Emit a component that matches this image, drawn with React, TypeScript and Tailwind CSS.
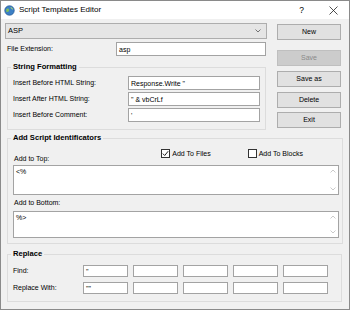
import React from 'react'

const font = "font-['Liberation_Sans',Arial,sans-serif]"

function TextBox({ value = '', className = '' }: { value?: string; className?: string }) {
  return (
    <div className={`bg-white border border-[#a3a3a3] flex items-center pl-[2px] text-[7px] leading-none whitespace-nowrap overflow-hidden ${className}`}>
      {value}
    </div>
  )
}

function Button({ label, disabled = false, className = '' }: { label: string; disabled?: boolean; className?: string }) {
  return (
    <div
      className={`w-[64px] h-[16px] flex items-center justify-center text-[7px] border ${
        disabled ? 'bg-[#cccccc] border-[#bfbfbf] text-[#8a8a8a]' : 'bg-[#e1e1e1] border-[#adadad] text-black'
      } ${className}`}
    >
      {label}
    </div>
  )
}

function Group({ title, className = '', children }: { title: string; className?: string; children: React.ReactNode }) {
  return (
    <fieldset className={`border border-[#dcdcdc] pl-[5px] ${className}`}>
      <legend className="ml-[-2px] px-[2px] text-[7.6px] leading-[10px] font-bold">{title}</legend>
      {children}
    </fieldset>
  )
}

function ScrollArea({ value, className = '' }: { value: string; className?: string }) {
  return (
    <div className={`bg-white border border-[#a3a3a3] flex ${className}`}>
      <div className="flex-1 pl-[2px] pt-[2px] text-[7px] leading-none">{value}</div>
      <div className="w-[10px] flex flex-col justify-between items-center py-[3px]">
        <svg width="6" height="4" viewBox="0 0 6 4">
          <polyline points="0.5,3.5 3,1 5.5,3.5" fill="none" stroke="#c4c4c4" strokeWidth="0.9" />
        </svg>
        <svg width="6" height="4" viewBox="0 0 6 4">
          <polyline points="0.5,0.5 3,3 5.5,0.5" fill="none" stroke="#c4c4c4" strokeWidth="0.9" />
        </svg>
      </div>
    </div>
  )
}

function Check({ checked, label }: { checked: boolean; label: string }) {
  return (
    <div className="flex items-center gap-[2px]">
      <div className="w-[9px] h-[9px] border border-[#333] bg-white flex items-center justify-center">
        {checked && (
          <svg width="7" height="7" viewBox="0 0 7 7">
            <polyline points="0.8,3.6 2.7,5.5 6.2,1.2" fill="none" stroke="#222" strokeWidth="1" />
          </svg>
        )}
      </div>
      <span className="text-[7px] leading-none">{label}</span>
    </div>
  )
}

export default function App() {
  const formatRows = [
    { label: 'Insert Before HTML String:', value: 'Response.Write "' },
    { label: 'Insert After HTML String:', value: '" & vbCrLf' },
    { label: 'Insert Before Comment:', value: "'" },
  ]

  return (
    <div className={`w-[350px] h-[310px] bg-[#f0f0f0] border border-[#8a8a8a] flex flex-col text-black ${font}`}>
      {/* title bar */}
      <div className="h-[18px] bg-white flex items-center shrink-0">
        <svg className="ml-[3px]" width="11" height="11" viewBox="0 0 11 11">
          <circle cx="5.5" cy="5.5" r="4.8" fill="#3c7fc4" />
          <path d="M2.2 4.2 C3.5 2.8 5 3.5 5.2 5 C5.4 6.5 3.5 7.5 2.3 6.8 Z" fill="#7fbf5a" />
          <path d="M6.3 2 C7.8 2.2 9 3.4 9.3 4.8 C8.2 4.6 7 4 6.3 2 Z" fill="#9fd07a" />
          <circle cx="5.5" cy="5.5" r="4.8" fill="none" stroke="#1d4f8a" strokeWidth="0.6" />
        </svg>
        <span className="ml-[4px] text-[8px] leading-none">Script Templates Editor</span>
        <span className="ml-auto text-[8.5px] leading-none mr-[25px]">?</span>
        <svg className="mr-[11px]" width="9" height="9" viewBox="0 0 9 9">
          <path d="M0.5 0.5 L8.5 8.5 M8.5 0.5 L0.5 8.5" stroke="#222" strokeWidth="0.8" />
        </svg>
      </div>

      <div className="pl-[4px] flex flex-col">
        <div className="flex">
          {/* left column */}
          <div className="w-[262px] flex flex-col">
            <div className="mt-[4px] h-[16px] bg-[#e5e5e5] border border-[#adadad] flex items-center pl-[2px] pr-[5px] text-[7.5px]">
              <span>ASP</span>
              <svg className="ml-auto" width="6" height="4" viewBox="0 0 6 4">
                <polyline points="0.5,0.5 3,3 5.5,0.5" fill="none" stroke="#555" strokeWidth="0.8" />
              </svg>
            </div>
            <div className="mt-[3px] flex items-center pl-[2px]">
              <span className="w-[109px] text-[7px]">File Extension:</span>
              <TextBox value="asp" className="w-[150px] h-[14px]" />
            </div>
            <Group title="String Formatting" className="ml-[2px] w-[259px] mt-[6px] pb-[7px]">
              <div className="flex flex-col gap-[2px] mt-[4px]">
                {formatRows.map((r) => (
                  <div key={r.label} className="flex items-center">
                    <span className="w-[115px] text-[7px]">{r.label}</span>
                    <TextBox value={r.value} className="w-[132px] h-[14px]" />
                  </div>
                ))}
              </div>
            </Group>
          </div>

          {/* right buttons */}
          <div className="ml-[10px] flex flex-col">
            <Button label="New" className="mt-[5px]" />
            <Button label="Save" disabled className="mt-[10px]" />
            <Button label="Save as" className="mt-[5px]" />
            <Button label="Delete" className="mt-[5px]" />
            <Button label="Exit" className="mt-[4px]" />
          </div>
        </div>

        <Group title="Add Script Identificators" className="ml-[2px] w-[336px] mt-[3px] pb-[5px] pl-[4px]">
          <div className="flex h-[20px] mt-[1px]">
            <span className="self-end mb-[2px] text-[7px] leading-none ml-[1px]">Add to Top:</span>
            <div className="ml-[112px] mt-[5px]">
              <Check checked label="Add To Files" />
            </div>
            <div className="ml-[37px] mt-[5px]">
              <Check checked={false} label="Add To Blocks" />
            </div>
          </div>
          <ScrollArea value="<%" className="w-[326px] h-[30px] mt-[1px]" />
          <div className="h-[16px] flex items-center text-[7px] ml-[1px]">Add to Bottom:</div>
          <ScrollArea value="%>" className="w-[326px] h-[27px]" />
        </Group>

        <Group title="Replace" className="ml-[2px] w-[335px] mt-[5px] pb-[7px]">
          <div className="flex flex-col gap-[5px] mt-[6px]">
            {[
              { label: 'Find:', first: '"' },
              { label: 'Replace With:', first: '""' },
            ].map((row) => (
              <div key={row.label} className="flex items-center">
                <span className="w-[70px] text-[7px]">{row.label}</span>
                <div className="flex gap-[5px]">
                  <TextBox value={row.first} className="w-[45px] h-[12px]" />
                  <TextBox className="w-[45px] h-[12px]" />
                  <TextBox className="w-[45px] h-[12px]" />
                  <TextBox className="w-[45px] h-[12px]" />
                  <TextBox className="w-[45px] h-[12px]" />
                </div>
              </div>
            ))}
          </div>
        </Group>
      </div>
    </div>
  )
}
